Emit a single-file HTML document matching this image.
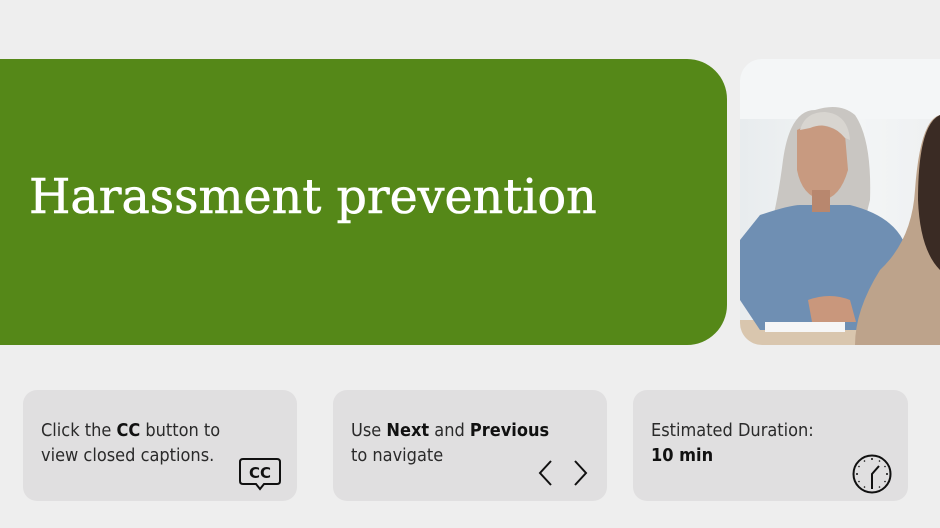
<!DOCTYPE html>
<html><head><meta charset="utf-8"><style>
body{margin:0;width:940px;height:528px;background:#eeeeee;position:relative;overflow:hidden;font-family:"DejaVu Sans Condensed","Liberation Sans",sans-serif}
.green{position:absolute;left:0;top:59px;width:727px;height:286px;background:#558818;border-radius:0 40px 40px 0}
.title{position:absolute;left:29px;top:170px;color:#fff;font-family:"DejaVu Serif","Liberation Serif",serif;font-size:47.5px;-webkit-text-stroke:0.6px #fff}
.photo{position:absolute;left:740px;top:59px;width:200px;height:286px;border-radius:22px 0 0 22px;overflow:hidden;background:linear-gradient(90deg,#e8ecee,#f3f5f6 60%,#eef0f1)}
.card{position:absolute;top:390px;height:111px;background:#e0dfe0;border-radius:14px;font-size:18px;color:#2a2a2a;line-height:25px}
.card .t{position:absolute;left:18px;top:28px}
b{color:#111}
</style></head><body>
<div class="green"></div>
<div class="title">Harassment prevention</div>
<div class="photo">
<svg width="200" height="286" viewBox="740 59 200 286">
<rect x="740" y="59" width="200" height="60" fill="#f4f6f7"/>
<rect x="740" y="320" width="200" height="30" fill="#d9c6ae"/>
<path d="M815 110 Q790 110 783 160 Q778 200 770 230 L800 240 L860 240 L870 200 Q872 140 855 115 Q840 102 815 110Z" fill="#c9c6c2"/>
<path d="M760 215 Q790 205 800 205 L850 205 Q890 215 903 240 L905 300 L880 330 L760 330 L740 300 L740 240Z" fill="#6f8fb3"/>
<path d="M797 130 Q820 118 845 135 L848 170 Q840 198 822 200 Q802 196 797 170Z" fill="#c89a80"/>
<rect x="812" y="190" width="18" height="22" fill="#b8876e"/>
<path d="M800 130 Q805 112 825 112 Q848 114 850 140 L845 138 Q830 120 810 128Z" fill="#d8d5d0"/>
<path d="M808 300 Q830 292 850 300 L856 322 L812 322Z" fill="#c9977c"/>
<rect x="765" y="322" width="80" height="10" fill="#f6f6f6"/>
<path d="M940 115 Q920 120 915 190 Q912 240 880 270 Q855 310 855 345 L940 345Z" fill="#bda38b"/>
<path d="M940 115 Q918 125 918 200 Q920 250 940 270Z" fill="#3a2b24"/>
</svg>
</div>
<div class="card" style="left:23px;width:274px"><div class="t">Click the <b>CC</b> button to<br>view closed captions.</div>
<svg style="position:absolute;left:216px;top:67px" width="44" height="36" viewBox="0 0 44 36"><path d="M4 2 H38 Q41 2 41 5 V24 Q41 27 38 27 H25 L21 32 L17 27 H4 Q1 27 1 24 V5 Q1 2 4 2Z" fill="none" stroke="#111" stroke-width="2"/><text x="21" y="21" text-anchor="middle" font-family="DejaVu Sans,sans-serif" font-weight="bold" font-size="15" fill="#111">CC</text></svg></div>
<div class="card" style="left:333px;width:274px"><div class="t">Use <b>Next</b> and <b>Previous</b><br>to navigate</div>
<svg style="position:absolute;left:200px;top:68px" width="60" height="30" viewBox="0 0 60 30"><path d="M18 3 L7 15 L18 27" fill="none" stroke="#111" stroke-width="2"/><path d="M42 3 L53 15 L42 27" fill="none" stroke="#111" stroke-width="2"/></svg></div>
<div class="card" style="left:633px;width:275px"><div class="t">Estimated Duration:<br><b>10 min</b></div>
<svg style="position:absolute;left:217px;top:63px" width="44" height="44" viewBox="0 0 44 44"><circle cx="22" cy="21" r="18.5" fill="none" stroke="#111" stroke-width="2"/><g fill="#111"><circle cx="22" cy="6" r="1"/><circle cx="29.5" cy="8" r="0.8"/><circle cx="35" cy="13.5" r="0.8"/><circle cx="37" cy="21" r="1"/><circle cx="35" cy="28.5" r="0.8"/><circle cx="29.5" cy="34" r="0.8"/><circle cx="14.5" cy="34" r="0.8"/><circle cx="9" cy="28.5" r="0.8"/><circle cx="7" cy="21" r="1"/><circle cx="9" cy="13.5" r="0.8"/><circle cx="14.5" cy="8" r="0.8"/></g><path d="M22 36 V21 L29 13" fill="none" stroke="#111" stroke-width="2"/></svg></div>
</body></html>
